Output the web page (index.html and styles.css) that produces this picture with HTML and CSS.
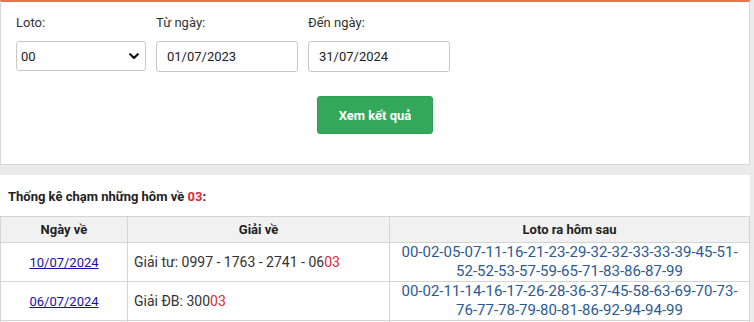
FILE: index.html
```html
<!DOCTYPE html>
<html lang="vi">
<head>
<meta charset="utf-8">
<link rel="stylesheet" href="styles.css">
</head>
<body>
<div class="page">
  <section class="card form-card">
    <div class="fields">
      <div class="field">
        <label class="lbl">Loto:</label>
        <div class="select">
          <span>00</span>
          <svg width="10" height="7" viewBox="0 0 10 7"><path d="M1.2 1.2 L5 5 L8.8 1.2" fill="none" stroke="#111" stroke-width="2.2" stroke-linecap="round" stroke-linejoin="round"/></svg>
        </div>
      </div>
      <div class="field">
        <label class="lbl">Từ ngày:</label>
        <div class="input">01/07/2023</div>
      </div>
      <div class="field">
        <label class="lbl">Đến ngày:</label>
        <div class="input">31/07/2024</div>
      </div>
    </div>
    <div class="actions">
      <button class="btn">Xem kết quả</button>
    </div>
  </section>
  <section class="card result-card">
    <h3 class="title">Thống kê chạm những hôm về <span class="red">03</span>:</h3>
    <table class="tbl">
      <thead>
        <tr><th class="c1">Ngày về</th><th class="c2">Giải về</th><th class="c3">Loto ra hôm sau</th></tr>
      </thead>
      <tbody>
        <tr>
          <td class="date"><a href="#">10/07/2024</a></td>
          <td class="prize">Giải tư: 0997 - 1763 - 2741 - 06<span class="red">03</span></td>
          <td class="loto">00-02-05-07-11-16-21-23-29-32-32-33-33-39-45-51-<br>52-52-53-57-59-65-71-83-86-87-99</td>
        </tr>
        <tr>
          <td class="date"><a href="#">06/07/2024</a></td>
          <td class="prize">Giải ĐB: 300<span class="red">03</span></td>
          <td class="loto">00-02-11-14-16-17-26-28-36-37-45-58-63-69-70-73-<br>76-77-78-79-80-81-86-92-94-94-99</td>
        </tr>
        <tr class="empty">
          <td class="date"></td>
          <td class="prize"></td>
          <td class="loto"></td>
        </tr>
      </tbody>
    </table>
  </section>
</div>
</body>
</html>
```
FILE: styles.css
```css
html, body {
  margin: 0;
  padding: 0;
  background: #ebebeb;
  font-family: Roboto, "Liberation Sans", Arial, sans-serif;
  color: #333;
  overflow: hidden;
}
.page {
  width: 750px;
}
.card {
  background: #fff;
  box-sizing: border-box;
}
.form-card {
  border: 1px solid #d6d6d6;
  border-top: 2px solid #e8734d;
  height: 165px;
  padding: 13px 15px 0 15px;
  margin-bottom: 10px;
}
.fields {
  display: flex;
  gap: 10px;
}
.field {
  display: flex;
  flex-direction: column;
}
.lbl {
  font-size: 13px;
  line-height: 16px;
  color: #333;
  margin-bottom: 10px;
}
.select, .input {
  box-sizing: border-box;
  height: 31px;
  border: 1px solid #c8c8c8;
  border-radius: 3px;
  font-size: 13px;
  color: #222;
  display: flex;
  align-items: center;
}
.select {
  width: 130px;
  padding: 0 4px 0 4px;
  justify-content: space-between;
  height: 30px;
}
.select svg { margin-right: 2px; }
.input {
  width: 142px;
  padding: 0 10px;
}
.actions {
  display: flex;
  justify-content: center;
  padding-top: 24px;
}
.btn {
  width: 116px;
  height: 38px;
  background: #34a85a;
  border: 1px solid #2f9e52;
  border-radius: 3px;
  color: #fff;
  font-family: Roboto, "Liberation Sans", Arial, sans-serif;
  font-weight: 700;
  font-size: 13px;
  padding: 0;
}
.result-card {
  padding-top: 14px;
  height: 160px;
}
.title {
  margin: 0 0 11px 8px;
  font-size: 13px;
  line-height: 16px;
  font-weight: 700;
  color: #222;
}
.red { color: #e3262e; }
.tbl {
  width: 750px;
  border-collapse: collapse;
  table-layout: fixed;
}
.tbl th, .tbl td {
  border: 1px solid #d4d4d4;
}
.tbl th {
  background: #f1f1f1;
  font-size: 13px;
  line-height: 16px;
  font-weight: 700;
  color: #222;
  height: 26px;
  padding: 0;
  box-sizing: border-box;
}
.c1 { width: 127px; }
.c2 { width: 262px; }
.tbl td {
  height: 39px;
  padding: 0;
  box-sizing: border-box;
}
.date {
  text-align: center;
  font-size: 13px;
}
.date a { color: #1a0dab; }
.prize {
  font-size: 14px;
  color: #333;
  padding-left: 6px !important;
}
.loto {
  text-align: center;
  font-size: 15px;
  line-height: 19px;
  color: #2a5a94;
}
```
